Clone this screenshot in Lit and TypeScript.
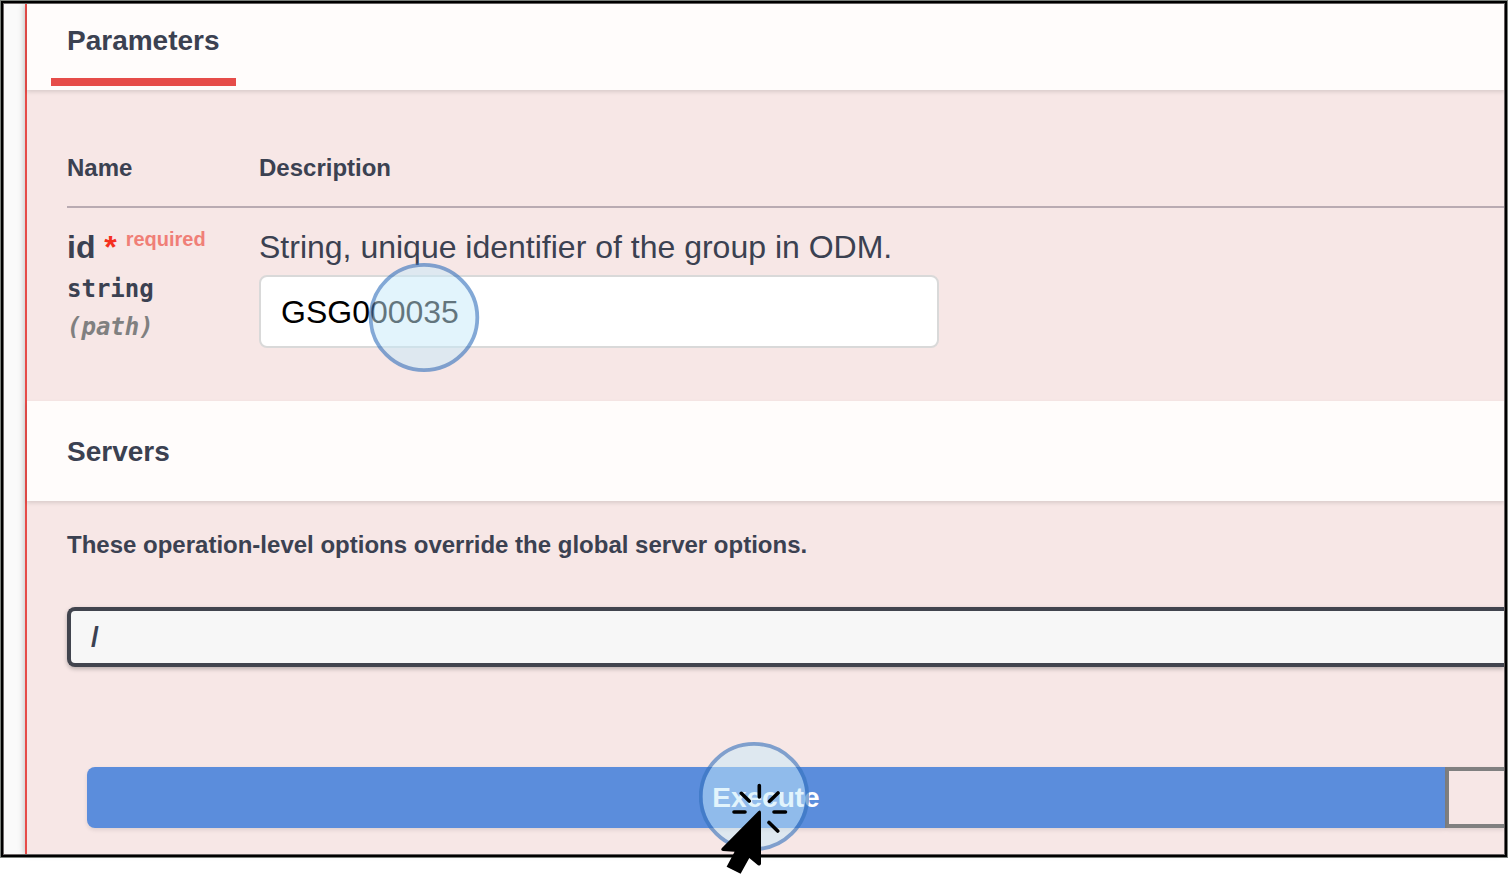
import { LitElement, html, css } from "lit";
import { customElement, state } from "lit/decorators.js";

@customElement("click-marker")
class ClickMarker extends LitElement {
  static properties = { pointer: { type: Boolean } };
  declare pointer: boolean;

  static styles = css`
    :host {
      display: block;
      pointer-events: none;
    }
    .marker {
      display: block;
      width: 111px;
      height: 134px;
    }
  `;

  render() {
    return html`
      <svg class="marker" viewBox="0 0 111 134" aria-hidden="true">
        <ellipse cx="55" cy="54.5" rx="51.5" ry="51" fill="rgba(197,233,250,.5)" />
        <ellipse cx="55" cy="54.5" rx="53.3" ry="52.6" fill="none" stroke="rgba(54,114,189,.62)" stroke-width="3.8" />
        ${this.pointer
          ? html`<svg>
              <path
                d="M60.3 43.5V55M42.3 51.3L50.2 59M79 51L70.5 59.2M35 70H46M75 70H86.5M70 80.5L78.7 89"
                fill="none"
                stroke="#000"
                stroke-width="3.6"
                stroke-linecap="round"
              />
              <path
                d="M59.3 69.2Q61.7 67.5 62 70.5V121.8Q61.6 124.5 59 123.2L50.3 116L41.6 131.8L27.6 124.8L35.6 109.8L24 109Q21.3 108.2 22.7 106.2Z"
                fill="#000"
              />
            </svg>`
          : null}
      </svg>
    `;
  }
}

@customElement("app-root")
export class AppRoot extends LitElement {
  @state() groupId = "GSG000035";

  static styles = css`
    :host {
      display: block;
      padding-bottom: 16px;
      font-family: "Liberation Sans", Arial, sans-serif;
      color: #3b4151;
      background: #fff;
    }
    * {
      box-sizing: border-box;
    }
    .frame {
      border: 1px solid #7d827d;
      background: #000;
      padding: 2px;
    }
    .page {
      border: 1px solid #6f6a6a;
      background: #fafafa;
      padding-left: 21px;
    }
    .operation {
      border-left: 2px solid #e64c49;
      background: #f7e7e6;
      box-shadow: -1px 0 6px rgba(0, 0, 0, 0.22);
      padding-bottom: 26px;
    }
    .bar {
      display: flex;
      background: #fffcfb;
      box-shadow: 0 2px 4px rgba(0, 0, 0, 0.12);
    }
    .bar-tabs {
      padding: 0 24px 4px;
    }
    .bar-title {
      height: 100px;
      align-items: center;
      padding: 2px 40px 0;
    }
    .heading {
      margin: 0;
      font-size: 28px;
      line-height: 32px;
      font-weight: 700;
    }
    .tab {
      padding: 21px 16px 21px;
      border-bottom: 8px solid #e64c49;
    }
    .parameters {
      padding: 56px 0 53px 40px;
    }
    table {
      width: 100%;
      border-collapse: collapse;
      text-align: left;
    }
    th {
      padding: 8px 0 24px;
      font-size: 24px;
      line-height: 28px;
      border-bottom: 2px solid #b9abb2;
    }
    td {
      padding: 20px 0 0;
      vertical-align: top;
    }
    .col-name {
      width: 192px;
    }
    .name {
      font-size: 32px;
      line-height: 38px;
      font-weight: 700;
      white-space: nowrap;
    }
    .star {
      color: #f5301e;
    }
    .required {
      display: inline-block;
      font-size: 20px;
      line-height: 20px;
      vertical-align: 12px;
      color: #f07f77;
    }
    .type,
    .place {
      font-family: "DejaVu Sans Mono", monospace;
      font-size: 24px;
      line-height: 38px;
      font-weight: 700;
    }
    .type {
      padding-top: 4px;
    }
    .place {
      font-style: italic;
      color: #808080;
    }
    .about {
      display: block;
      font-size: 32px;
      line-height: 38px;
    }
    .field {
      position: relative;
      width: 680px;
      max-width: 100%;
      margin-top: 9px;
    }
    .input {
      display: block;
      width: 100%;
      height: 73px;
      padding: 2px 20px 0;
      border: 2px solid #d9d9d9;
      border-radius: 8px;
      background: #fff;
      color: #000;
      font: 32px "Liberation Sans", Arial, sans-serif;
    }
    .field-marker {
      position: absolute;
      left: 110px;
      top: -12px;
    }
    .servers {
      padding: 30px 0 0 40px;
    }
    .hint {
      display: block;
      font-size: 24px;
      line-height: 28px;
      font-weight: 700;
    }
    .select {
      display: block;
      appearance: none;
      width: 100%;
      height: 60px;
      margin-top: 48px;
      padding: 0 20px 2px;
      border: 4px solid #41444e;
      border-right: 0;
      border-radius: 8px 0 0 8px;
      background: #f7f7f7;
      box-shadow: 0 2px 4px rgba(0, 0, 0, 0.25);
      color: #3b4151;
      font: 700 28px "Liberation Sans", Arial, sans-serif;
    }
    .actions {
      display: flex;
      padding: 100px 0 0 60px;
    }
    .execute-slot {
      position: relative;
      flex: 1;
    }
    .button {
      display: block;
      height: 61px;
      font: 700 28px "Liberation Sans", Arial, sans-serif;
      box-shadow: 0 2px 4px rgba(0, 0, 0, 0.1);
    }
    .execute {
      width: 100%;
      border: 0;
      border-radius: 8px 0 0 8px;
      background: #5b8ddc;
      color: #fff;
    }
    .clear {
      width: 59px;
      border: 4px solid #808080;
      border-right: 0;
      background: transparent;
    }
    .execute-marker {
      position: absolute;
      left: calc(50% - 67px);
      top: -25px;
    }
  `;

  render() {
    return html`
      <main class="frame">
        <div class="page">
          <section class="operation">
            <div class="bar bar-tabs"><h4 class="heading tab">Parameters</h4></div>
            <div class="parameters">
              <table>
                <thead>
                  <tr>
                    <th class="col-name">Name</th>
                    <th>Description</th>
                  </tr>
                </thead>
                <tbody>
                  <tr>
                    <td>
                      <div class="name">id <span class="star">*</span> <span class="required">required</span></div>
                      <div class="type">string</div>
                      <div class="place">(path)</div>
                    </td>
                    <td>
                      <label class="about" for="group-id">String, unique identifier of the group in ODM.</label>
                      <div class="field">
                        <input
                          class="input"
                          id="group-id"
                          type="text"
                          .value=${this.groupId}
                          @input=${(e: Event) => (this.groupId = (e.target as HTMLInputElement).value)}
                        />
                        <click-marker class="field-marker"></click-marker>
                      </div>
                    </td>
                  </tr>
                </tbody>
              </table>
            </div>
            <div class="bar bar-title"><h4 class="heading">Servers</h4></div>
            <div class="servers">
              <label class="hint" for="server">These operation-level options override the global server options.</label>
              <select class="select" id="server">
                <option>/</option>
              </select>
            </div>
            <div class="actions">
              <div class="execute-slot">
                <button class="button execute" type="button">Execute</button>
                <click-marker class="execute-marker" .pointer=${true}></click-marker>
              </div>
              <button class="button clear" type="button" aria-label="Clear"></button>
            </div>
          </section>
        </div>
      </main>
    `;
  }
}
